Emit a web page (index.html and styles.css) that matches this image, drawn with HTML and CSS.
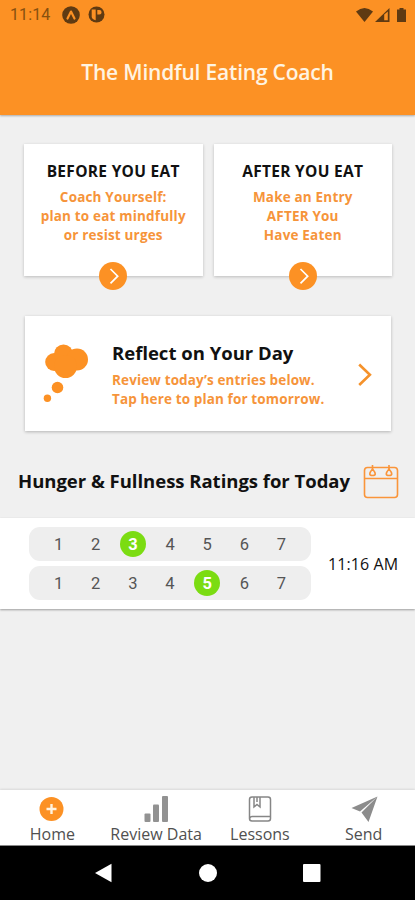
FILE: index.html
```html
<!DOCTYPE html>
<html lang="en">
<head>
<meta charset="utf-8">
<title>The Mindful Eating Coach</title>
<link rel="stylesheet" href="styles.css">
</head>
<body>
<div class="screen">
  <header class="header">
    <div class="status">
      <span class="clock">11:14</span>
      <svg class="st-app" width="18" height="18" viewBox="0 0 18 18"><circle cx="9" cy="9" r="8.800" fill="#5f3a12"/><path d="M5.500 12.600 9 5.600l3.500 7" fill="none" stroke="#fc9124" stroke-width="2.200" stroke-linejoin="round" stroke-linecap="round"/></svg>
      <svg class="st-app second" width="17" height="17" viewBox="0 0 17 17"><circle cx="8.500" cy="8.500" r="8" fill="#5f3a12"/><path d="M3.700 3.500h4v10.800C5.600 14 3.700 12.500 3.700 11zM9.300 4h2a2.300 2.300 0 0 1 0 4.600h-2z" fill="#fc9124"/></svg>
      <span class="grow"></span>
      <svg class="st-right" width="52" height="18" viewBox="0 0 52 18"><path d="M1 5.500Q9.500-1.500 18 5.500L9.500 16z" fill="#5f3a12"/><path d="M20 16 34.500 2v14z" fill="#5f3a12"/><path d="M29.200 8.500 32.800 5.500v8.800h-3.600z" fill="#fc9124"/><path d="M42 3.500h2.500V2h4v1.500H51V16h-9z" fill="#5f3a12"/></svg>
    </div>
    <h1 class="title">The Mindful Eating Coach</h1>
  </header>

  <main class="content">
    <section class="cards">
      <article class="card">
        <h2 class="card-title">BEFORE YOU EAT</h2>
        <p class="card-text">Coach Yourself:<br>plan to eat mindfully<br>or resist urges</p>
        <svg class="go" width="28" height="28" viewBox="0 0 28 28"><circle cx="14" cy="14" r="14" fill="#fc9124"/><path d="m11.500 7 7.200 7.200-7.200 7.200" fill="none" stroke="#fff" stroke-width="1.700"/></svg>
      </article>
      <article class="card">
        <h2 class="card-title">AFTER YOU EAT</h2>
        <p class="card-text">Make an Entry<br>AFTER You<br>Have Eaten</p>
        <svg class="go" width="28" height="28" viewBox="0 0 28 28"><circle cx="14" cy="14" r="14" fill="#fc9124"/><path d="m11.500 7 7.200 7.200-7.200 7.200" fill="none" stroke="#fff" stroke-width="1.700"/></svg>
      </article>
    </section>

    <section class="reflect">
      <svg class="thought" width="46" height="60" viewBox="0 0 46 60"><g fill="#fc9124"><circle cx="11.200" cy="18" r="9"/><circle cx="20.500" cy="10" r="9.500"/><circle cx="34" cy="15.500" r="11"/><circle cx="22.500" cy="22.500" r="11.500"/><circle cx="14.500" cy="43.500" r="5.800"/><circle cx="4.400" cy="54.200" r="3.700"/></g></svg>
      <div class="reflect-body">
        <h2 class="reflect-title">Reflect on Your Day</h2>
        <p class="reflect-text">Review today’s entries below.<br>Tap here to plan for tomorrow.</p>
      </div>
      <svg class="chev" width="16" height="24" viewBox="0 0 16 24"><path d="m2.200 1.500 10.700 10.300L2.200 22" fill="none" stroke="#f5922b" stroke-width="2.600"/></svg>
    </section>

    <section class="ratings-head">
      <h2 class="ratings-title">Hunger &amp; Fullness Ratings for Today</h2>
      <svg class="cal" width="36" height="34" viewBox="0 0 36 34" fill="none" stroke="#fa953a" stroke-width="1.600"><rect x="1.500" y="2.500" width="33" height="30" rx="3"/><path d="M1.500 13.500h33M9.500 0v4.500M26 0v4.500"/><path d="M9.500 4q-5.500 6.500 0 6.500t0-6.500zM26 4q-5.500 6.500 0 6.500t0-6.500z"/></svg>
    </section>

    <section class="entry">
      <div class="scales">
        <div class="scale"><span>1</span><span>2</span><span class="on">3</span><span>4</span><span>5</span><span>6</span><span>7</span></div>
        <div class="scale"><span>1</span><span>2</span><span>3</span><span>4</span><span class="on">5</span><span>6</span><span>7</span></div>
      </div>
      <div class="time">11:16 AM</div>
    </section>
  </main>

  <nav class="tabs">
    <div class="tab"><svg width="28" height="28" viewBox="0 0 28 28"><circle cx="13.500" cy="14" r="12" fill="#fc9124"/><path d="M13.500 9v10M8.500 14h10" stroke="#fff3e0" stroke-width="2.400"/></svg><span>Home</span></div>
    <div class="tab"><svg width="28" height="28" viewBox="0 0 28 28"><g fill="#929292"><rect x="2.500" y="18.500" width="6" height="8.500" rx="1"/><rect x="11" y="9.500" width="6" height="17.500" rx="1"/><rect x="20" y="1" width="6" height="26" rx="1"/></g></svg><span>Review Data</span></div>
    <div class="tab"><svg width="28" height="28" viewBox="0 0 28 28" fill="none" stroke="#868686" stroke-width="1.500"><rect x="3.500" y="2" width="21" height="24" rx="2.500"/><path d="M3.800 23.500q0-2 2.500-2h18M8 2v10l3-2.500 3 2.500V2M11 2v5"/></svg><span>Lessons</span></div>
    <div class="tab"><svg width="28" height="28" viewBox="0 0 28 28"><path d="M27.500 1.500 1.500 13l8.500 3.500zM27.500 1.500 11.500 17.500 18.500 27z" fill="#8c8c8c"/></svg><span>Send</span></div>
  </nav>

  <footer class="sysnav">
    <svg width="18" height="20" viewBox="0 0 18 20"><path d="M16.500 .8v18.400L0 10z" fill="#fff"/></svg>
    <svg width="18" height="18" viewBox="0 0 18 18"><circle cx="9" cy="9" r="9" fill="#fff"/></svg>
    <svg width="18" height="18" viewBox="0 0 18 18"><rect width="17.500" height="18" rx="1" fill="#fff"/></svg>
  </footer>
</div>
</body>
</html>
```
FILE: styles.css
```css
* { box-sizing: border-box; margin: 0; padding: 0; }
body { width: 415px; height: 900px; overflow: hidden; font-family: "Open Sans", sans-serif; background: #f0f0f0; color: #111; }
svg { display: block; flex: none; }
.screen { height: 900px; display: flex; flex-direction: column; }

.header { height: 115px; background: #fc9124; box-shadow: 0 1px 2px rgba(0,0,0,.3); }
.status { height: 29px; display: flex; align-items: center; padding: 0 8px 0 10px; }
.clock { width: 52px; font: 16px/20px Roboto, sans-serif; letter-spacing: .1px; color: #87500f; }
.st-app.second { margin-left: 8px; }
.grow { flex: 1; }
.title { font-size: 21px; font-weight: 600; line-height: 28px; margin-top: 29px; letter-spacing: -.2px; text-align: center; color: #fff4e2; white-space: nowrap; }

.content { flex: 1; }
.cards { display: flex; gap: 11px; padding: 29px 23px 0 24px; }
.card { position: relative; flex: 1; height: 132px; padding-top: 17px; background: #fff; text-align: center; box-shadow: 0 1px 3px rgba(0,0,0,.22); white-space: nowrap; }
.card-title { font-size: 15.500px; font-weight: 700; line-height: 20px; letter-spacing: .3px; color: #111; }
.card-text { margin-top: 7px; font-size: 13.500px; font-weight: 700; line-height: 19px; letter-spacing: .18px; color: #f6943a; }
.go { position: absolute; left: 50%; bottom: -14px; margin-left: -14px; }

.reflect { display: flex; height: 115px; margin: 40px 24px 0 25px; padding: 0 18px; background: #fff; box-shadow: 0 1px 3px rgba(0,0,0,.25); white-space: nowrap; }
.thought { margin-top: 28px; }
.reflect-body { flex: 1; margin-left: 23px; padding-top: 24px; }
.reflect-title { font-size: 18.500px; font-weight: 700; line-height: 25px; }
.reflect-text { margin-top: 6px; font-size: 13.500px; font-weight: 700; line-height: 19px; letter-spacing: .13px; color: #f6943a; }
.chev { margin-top: 47px; }

.ratings-head { display: flex; align-items: center; justify-content: space-between; height: 87px; padding: 14px 16px 0 18px; white-space: nowrap; }
.ratings-title { font-size: 18.500px; font-weight: 700; line-height: 26px; margin-top: -2px; letter-spacing: -.02px; }
.entry { display: flex; align-items: center; height: 91px; background: #fff; box-shadow: 0 1px 2px rgba(0,0,0,.35); }
.scales { width: 282px; margin-left: 29px; display: grid; gap: 5px; }
.scale { display: flex; align-items: center; height: 34px; padding: 0 11px; border-radius: 11px; background: #eee; }
.scale span { flex: 1; height: 26px; font: 16.500px/28px Roboto, sans-serif; text-align: center; color: #555; }
.scale .on { flex: none; width: 26px; margin: 0 5.600px; border-radius: 50%; background: #7bdc12; color: #fff; font-weight: 700; }
.time { width: 71px; margin-left: 17px; font-size: 16px; line-height: 20px; letter-spacing: .1px; white-space: nowrap; font-weight: 500; }

.tabs { display: flex; height: 56px; background: #fff; border-bottom: 1px solid #888; box-shadow: 0 -1px 2px rgba(0,0,0,.1); }
.tab { display: flex; flex-direction: column; align-items: center; padding: 5px 0 0 1px; width: 104px; font-size: 16px; line-height: 22px; color: #505050; white-space: nowrap; }
.sysnav { height: 54px; background: #000; display: flex; align-items: center; justify-content: center; gap: 86px; }
```
